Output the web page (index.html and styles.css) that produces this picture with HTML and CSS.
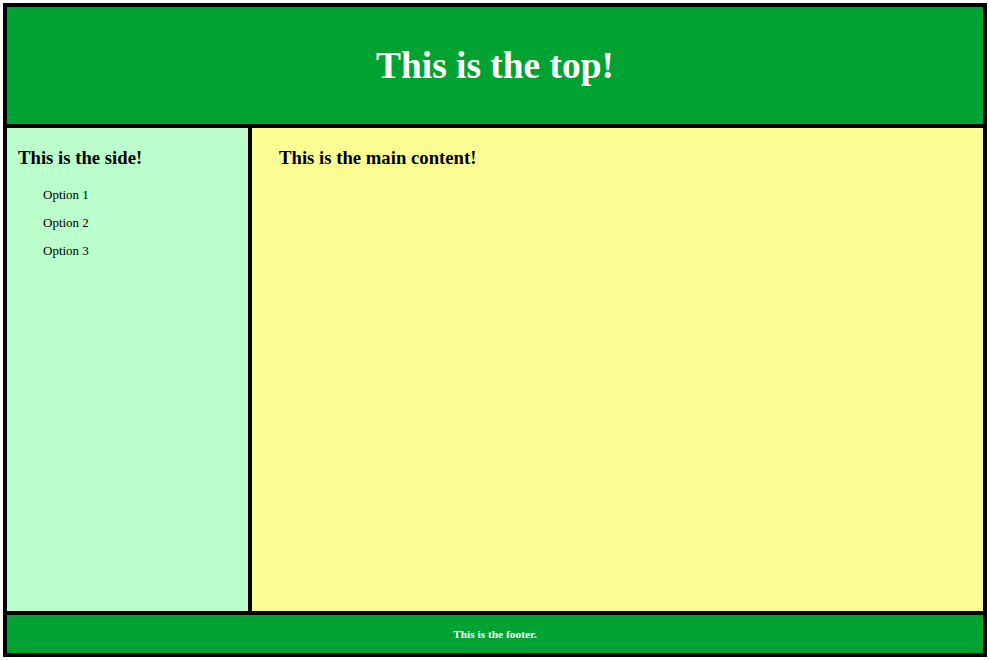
FILE: index.html
```html
<!DOCTYPE html>
<html>
<head>
<meta charset="utf-8">
<title>Layout</title>
<link rel="stylesheet" href="styles.css">
</head>
<body>
<div class="page">
  <header class="top">
    <h1 class="top-title">This is the top!</h1>
  </header>
  <div class="middle">
    <aside class="side">
      <h3 class="side-title">This is the side!</h3>
      <ul class="options">
        <li>Option 1</li>
        <li>Option 2</li>
        <li>Option 3</li>
      </ul>
    </aside>
    <main class="main">
      <h3 class="main-title">This is the main content!</h3>
    </main>
  </div>
  <footer class="footer">This is the footer.</footer>
</div>
</body>
</html>
```
FILE: styles.css
```css
html, body {
  margin: 0;
  padding: 0;
  background: #ffffff;
}
body {
  padding: 3px;
  font-family: "Liberation Serif", "Times New Roman", serif;
  color: #000;
}
.page {
  width: 976px;
  height: 646px;
  border: 4px solid #000;
  display: flex;
  flex-direction: column;
}
.top {
  height: 117px;
  background: #00a332;
  border-bottom: 4px solid #000;
  display: flex;
  align-items: center;
  justify-content: center;
}
.top-title {
  margin: 0;
  font-size: 37.4px;
  font-weight: bold;
  color: #ffffff;
}
.middle {
  height: 483px;
  display: flex;
}
.side {
  width: 230px;
  padding: 0 0 0 11px;
  background: #bbffcc;
  border-right: 4px solid #000;
}
.side-title, .main-title {
  margin: 18.72px 0 11.8px 0;
  font-size: 18.72px;
  font-weight: bold;
}
.options {
  list-style: none;
  margin: 0;
  padding: 0 0 0 25px;
  font-size: 13px;
  line-height: 28px;
}
.main {
  flex: 1;
  padding-left: 27px;
  background: #fbff93;
}
.footer {
  height: 38px;
  background: #00a332;
  border-top: 4px solid #000;
  color: #ffffff;
  font-size: 11.4px;
  font-weight: bold;
  display: flex;
  align-items: center;
  justify-content: center;
}
```
